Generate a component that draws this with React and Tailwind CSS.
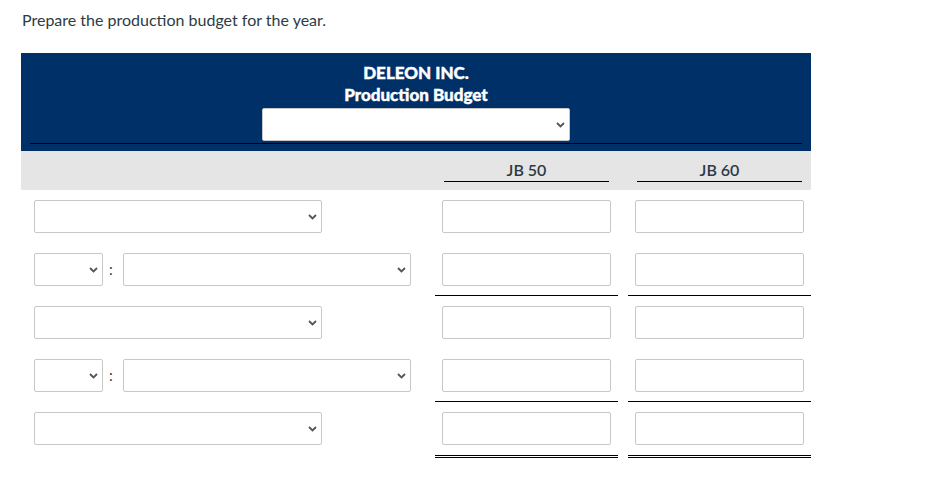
import React from 'react';

const Chevron = () => (
  <svg className="pointer-events-none absolute right-[5px] top-1/2 -translate-y-1/2" width="9" height="6" viewBox="0 0 9 6" fill="none">
    <path d="M1 1l3.5 3.5L8 1" stroke="#555" strokeWidth="1.8" />
  </svg>
);

const Select = ({ className }) => (
  <div className={`relative h-[33px] ${className}`}>
    <select className="h-full w-full appearance-none rounded-[2px] border border-[#c8c8c8] bg-white"></select>
    <Chevron />
  </div>
);

const Input = () => (
  <input type="text" className="h-[33px] w-full rounded-[2px] border border-[#c8c8c8] bg-white" />
);

const Cell = ({ line }) => (
  <div
    className={`w-[183px] h-full px-[7px] pt-[10px] ${
      line === 'single' ? 'border-b border-black' : line === 'double' ? 'border-b-[3px] border-double border-black' : ''
    }`}
  >
    <Input />
  </div>
);

const Row = ({ split, line, last }) => (
  <div className={`flex gap-[10px] ${last ? 'h-[56px]' : 'h-[53px]'}`}>
    <div className="w-[404px] pt-[10px] pl-[13px]">
      {split ? (
        <div className="flex items-center">
          <Select className="w-[69px]" />
          <span className="w-[20px] pl-[6px] text-left text-[15px] text-[#2d3b45]">:</span>
          <Select className="w-[288px]" />
        </div>
      ) : (
        <Select className="w-[288px]" />
      )}
    </div>
    <Cell line={line} />
    <Cell line={line} />
  </div>
);

export default function App() {
  return (
    <div className="min-h-screen bg-white font-['Lato',sans-serif] text-[#2d3b45]">
      <p className="pl-[22px] pt-[10px] text-[16px] leading-[20px]">Prepare the production budget for the year.</p>

      <div className="ml-[21px] mt-[23px] w-[790px]">
        <div className="flex h-[98px] flex-col items-center bg-[#003068] px-[9px] pt-[10px]">
          <div className="text-[17px] font-black leading-[20px] text-white [-webkit-text-stroke:0.4px_white]">DELEON INC.</div>
          <div className="mt-[2px] text-[17px] font-black leading-[20px] text-white [-webkit-text-stroke:0.4px_white]">Production Budget</div>
          <div className="mt-[3px] w-full border-b border-black pb-[2px]">
            <Select className="mx-auto w-[308px]" />
          </div>
        </div>

        <div className="flex h-[39px] gap-[10px] bg-[#e5e5e5]">
          <div className="w-[404px]"></div>
          <div className="w-[183px] px-[9px] pt-[9px]">
            <div className="border-b border-black pb-[2px] text-center text-[16px] font-semibold leading-[19px]">JB 50</div>
          </div>
          <div className="w-[183px] px-[9px] pt-[9px]">
            <div className="border-b border-black pb-[2px] text-center text-[16px] font-semibold leading-[19px]">JB 60</div>
          </div>
        </div>

        <Row />
        <Row split line="single" />
        <Row />
        <Row split line="single" />
        <Row line="double" last />
      </div>
    </div>
  );
}
